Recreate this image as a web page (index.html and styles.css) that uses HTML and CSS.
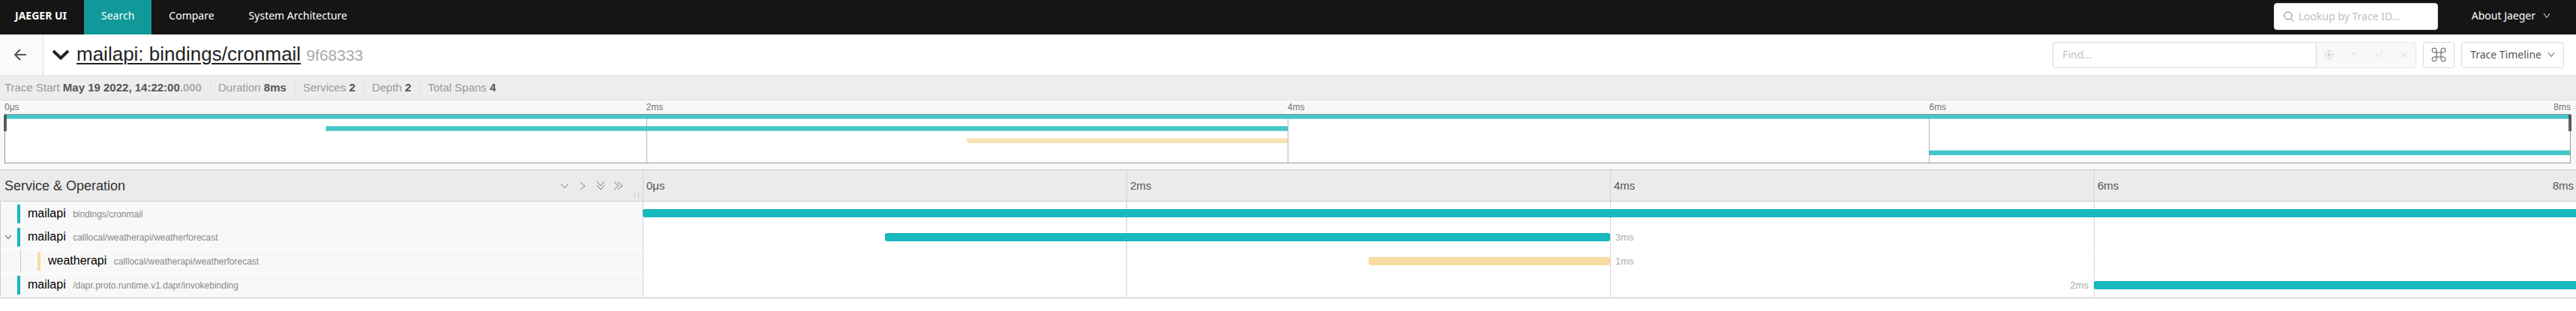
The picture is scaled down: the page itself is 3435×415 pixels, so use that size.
FILE: index.html
```html
<!DOCTYPE html>
<html lang="en">
<head>
<meta charset="utf-8">
<title>Jaeger UI</title>
<link rel="stylesheet" href="styles.css">
</head>
<body>
<nav class="topnav">
  <a class="nav-item brand" href="#">JAEGER UI</a>
  <a class="nav-item active" href="#">Search</a>
  <a class="nav-item" href="#">Compare</a>
  <a class="nav-item" href="#">System Architecture</a>
  <label class="lookup">
    <svg class="icon" width="14" height="14" viewBox="0 0 14 14"><circle cx="6" cy="6" r="5"/><path d="M9.600 9.600L13.500 13.500"/></svg>
    <input type="text" aria-label="Lookup by Trace ID" placeholder="Lookup by Trace ID...">
  </label>
  <button class="about" type="button">About Jaeger
    <svg class="icon" width="10" height="8" viewBox="0 0 10 8"><path d="M1 1L5 6.500L9 1"/></svg>
  </button>
</nav>

<header class="trace-header">
  <a class="back" href="#" aria-label="Back">
    <svg class="icon" width="16" height="16" viewBox="0 0 16 16"><path d="M16 8H1M8 1L1 8L8 15"/></svg>
  </a>
  <button class="title-toggle" type="button" aria-label="Toggle details">
    <svg class="icon" width="22" height="14" viewBox="0 0 22 14"><path d="M1 2L11 11.500L21 2"/></svg>
  </button>
  <h1 class="title"><a href="#">mailapi: bindings/cronmail</a> <small>9f68333</small></h1>
  <div class="find">
    <input type="text" aria-label="Find" placeholder="Find...">
    <div class="find-actions">
      <button type="button" disabled aria-label="Locate"><svg class="icon" width="14" height="14" viewBox="0 0 14 14"><circle cx="7" cy="7" r="5"/><circle class="dot" cx="7" cy="7" r="2"/><path d="M7 0V2M7 12V14M0 7H2M12 7H14"/></svg></button>
      <button type="button" disabled aria-label="Previous"><svg class="icon" width="12" height="8" viewBox="0 0 12 8"><path d="M1 7L6 1L11 7"/></svg></button>
      <button type="button" disabled aria-label="Next"><svg class="icon" width="12" height="8" viewBox="0 0 12 8"><path d="M1 1L6 7L11 1"/></svg></button>
      <button type="button" disabled aria-label="Clear"><svg class="icon" width="10" height="10" viewBox="0 0 10 10"><path d="M1 1L9 9M9 1L1 9"/></svg></button>
    </div>
  </div>
  <button class="tool" type="button" aria-label="Keyboard shortcuts">
    <svg class="icon" width="20" height="20" viewBox="0 0 20 20"><path d="M7 7V4A3 3 0 1 0 4 7H16A3 3 0 1 0 13 4V16A3 3 0 1 0 16 13H4A3 3 0 1 0 7 16Z"/></svg>
  </button>
  <button class="tool view" type="button">Trace Timeline
    <svg class="icon" width="10" height="8" viewBox="0 0 10 8"><path d="M1 1L5 6.500L9 1"/></svg>
  </button>
</header>

<ul class="overview">
  <li>Trace Start <b>May 19 2022, 14:22:00<span>.000</span></b></li>
  <li>Duration <b>8ms</b></li>
  <li>Services <b>2</b></li>
  <li>Depth <b>2</b></li>
  <li>Total Spans <b>4</b></li>
</ul>

<section class="minimap">
  <div class="minimap-ticks"><span>0μs</span><span>2ms</span><span>4ms</span><span>6ms</span><span class="last">8ms</span></div>
  <div class="minimap-graph">
    <svg class="minimap-spans" viewBox="0 0 800 650" preserveAspectRatio="none">
      <rect class="teal" x="0" y="-8" width="800" height="65"/>
      <rect class="teal" x="100" y="156" width="300" height="65"/>
      <rect class="sand" x="300" y="320" width="100" height="65"/>
      <rect class="teal" x="600" y="484" width="200" height="65"/>
    </svg>
    <div class="minimap-grid"><i></i><i></i><i></i><i></i></div>
    <i class="handle handle-left"></i>
    <i class="handle handle-right"></i>
  </div>
</section>

<main class="timeline">
  <div class="row head">
    <div class="names">
      <h2>Service &amp; Operation</h2>
      <div class="collapsers">
        <button type="button" aria-label="Expand one level"><svg class="icon" width="14" height="14" viewBox="0 0 14 14"><path d="M2 4L7 10L12 4"/></svg></button>
        <button type="button" aria-label="Collapse one level"><svg class="icon" width="14" height="14" viewBox="0 0 14 14"><path d="M4 2L10 7L4 12"/></svg></button>
        <button type="button" aria-label="Expand all"><svg class="icon" width="14" height="14" viewBox="0 0 14 14"><path d="M2 1L7 7L12 1M2 6L7 12L12 6"/></svg></button>
        <button type="button" aria-label="Collapse all"><svg class="icon" width="14" height="14" viewBox="0 0 14 14"><path d="M1 2L7 7L1 12M6 2L12 7L6 12"/></svg></button>
      </div>
      <span class="grip"></span>
    </div>
    <div class="track"><span>0μs</span><span>2ms</span><span>4ms</span><span class="split">6ms<span>8ms</span></span></div>
  </div>

  <div class="row">
    <div class="names"><span class="twist"></span><a class="span-name teal" href="#">mailapi <small>bindings/cronmail</small></a></div>
    <div class="track"><i></i><i></i><i></i><i></i><div class="bar teal" style="left:0%;width:100%"></div></div>
  </div>
  <div class="row lined">
    <div class="names"><button class="twist" type="button" aria-label="Collapse children"><svg class="icon" width="10" height="7" viewBox="0 0 10 7"><path d="M1 1L5 5.500L9 1"/></svg></button><a class="span-name teal" href="#">mailapi <small>calllocal/weatherapi/weatherforecast</small></a></div>
    <div class="track"><i></i><i></i><i></i><i></i><div class="bar teal" style="left:12.5%;width:37.5%"><span class="after">3ms</span></div></div>
  </div>
  <div class="row lined">
    <div class="names"><span class="twist"></span><span class="guide"></span><a class="span-name sand" href="#">weatherapi <small>calllocal/weatherapi/weatherforecast</small></a></div>
    <div class="track"><i></i><i></i><i></i><i></i><div class="bar sand" style="left:37.5%;width:12.5%"><span class="after">1ms</span></div></div>
  </div>
  <div class="row lined">
    <div class="names"><span class="twist"></span><a class="span-name teal" href="#">mailapi <small>/dapr.proto.runtime.v1.dapr/invokebinding</small></a></div>
    <div class="track"><i></i><i></i><i></i><i></i><div class="bar teal" style="left:75%;width:25%"><span class="before">2ms</span></div></div>
  </div>
</main>
</body>
</html>
```
FILE: styles.css
```css
* { box-sizing: border-box; }
body { margin: 0; background: #fff; color: #555; font: 14px/20px "Liberation Sans", Arial, sans-serif; overflow-x: hidden; }
a { color: inherit; text-decoration: none; }
button { margin: 0; padding: 0; border: 0; background: none; color: inherit; font: inherit; }
input { margin: 0; border: 0; outline: 0; background: none; color: #555; font: 14px/20px "Noto Sans", sans-serif; }
input::placeholder { color: #bfbfbf; opacity: 1; }
.icon { display: block; flex: none; fill: none; stroke: currentColor; stroke-width: 1; }

.topnav { display: flex; align-items: center; height: 46px; background: #151515; color: #fff; font: 14px/46px "Noto Sans", sans-serif; }
.nav-item { padding: 0 23px 4px; line-height: 42px; }
.brand { padding-left: 20px; font-weight: 700; }
.active { background: #119999; }
.lookup { display: flex; align-items: center; gap: 6px; width: 219px; height: 36px; margin: 0 45px 2px auto; padding: 0 12px; border: 1px solid #d9d9d9; border-radius: 4px; background: #fff; color: #777; }
.lookup input { flex: 1; min-width: 0; padding: 0; }
.about { display: flex; align-items: center; gap: 10px; margin-right: 34px; line-height: 42px; padding-bottom: 4px; }

.trace-header { display: flex; align-items: center; height: 55px; padding-right: 16px; border-bottom: 1px solid #e4e4e4; }
.back { display: flex; align-items: center; align-self: stretch; width: 58px; padding-left: 19px; border-right: 1px solid #ddd; background: #fafafa; }
.back .icon { stroke-width: 2; }
.title-toggle { margin-left: 12px; color: #222; }
.title-toggle .icon { stroke-width: 4; }
.title { flex: 1; margin: 0 0 0 10px; color: #222; font-size: 26px; line-height: 32px; font-weight: 400; }
.title a { text-decoration: underline; text-underline-offset: 3px; text-decoration-thickness: 2px; }
.title small { color: #aaa; font-size: 21px; }
.find { display: flex; height: 35px; margin-right: 9px; }
.find input { width: 352px; padding: 0 12px; border: 1px solid #d9d9d9; border-radius: 4px 0 0 4px; }
.find-actions { display: grid; grid-template-columns: repeat(4, 33px); border: 1px solid #e6e6e6; border-left: 0; border-radius: 0 4px 4px 0; background: #f9f9f9; color: #ddd; }
.find-actions button { display: grid; place-items: center; color: #d5d5d5; }
.dot { fill: currentColor; }
.tool { display: flex; align-items: center; gap: 8px; height: 35px; margin-left: 9px; padding: 0 10px; border: 1px solid #d9d9d9; border-radius: 4px; color: #555; font: 14px/20px "Noto Sans", sans-serif; }
.view { padding: 0 11px; }
.find + .tool { margin-left: 0; }

.overview { display: flex; margin: 0; padding: 0 6px; height: 33px; list-style: none; line-height: 32px; font-size: 15px; color: #999; background: #ededed; border-bottom: 1px solid #e0e0e0; }
.overview li + li { margin-left: 11px; padding-left: 11px; background: linear-gradient(#ddd, #ddd) 0 9px / 1px 14px no-repeat; }
.overview b { color: #555; }
.overview b span { color: #aaa; }

.minimap { padding: 0 7px 8px 6px; background: #f8f8f8; border-bottom: 1px solid #ccc; }
.minimap-ticks { display: grid; grid-template-columns: repeat(3, 1fr) 1fr auto; height: 18px; font-size: 12px; line-height: 18px; color: #717171; }
.minimap-ticks span { width: 0; }
.minimap-ticks .last { display: flex; justify-content: flex-end; }
.minimap-graph { position: relative; height: 66px; border: 1px solid #999; background: #fff; }
.minimap-spans { display: block; width: 100%; height: 100%; }
.teal { --tone: #17b8be; }
.sand { --tone: #f8dca1; }
.minimap-spans rect { fill: var(--tone); opacity: .8; }
.minimap-grid { position: absolute; inset: 0; display: grid; grid-template-columns: repeat(4, 1fr); }
.minimap-grid i + i { border-left: 1px solid rgba(153, 153, 153, .7); }
.handle { position: absolute; top: 0; width: 4px; height: 22px; background: rgba(70, 70, 70, .85); }
.handle-left { left: -2px; }
.handle-right { right: -2px; }

.row { display: flex; height: 32px; margin-right: -2px; }
.names { position: relative; display: flex; align-items: center; flex: 0 0 857px; border-left: 1px solid #ccc; background: #f8f8f8; }
.track { position: relative; display: grid; grid-template-columns: repeat(4, 1fr); flex: 1; }
.track > i, .track > span { border-left: 1px solid #d4d4d4; }
.lined { border-bottom: 1px solid #fff; }
.timeline { border-bottom: 1px solid #bbb; overflow: hidden; }
.head { height: 42px; background: #ebebeb; border-bottom: 1px solid #ccc; }
.head .names { padding-left: 6px; border: 0; background: none; }
.head h2 { flex: 1; margin: 0; color: #333; font-size: 18px; font-weight: 400; }
.head .track { font-size: 15px; line-height: 41px; }
.head .track > span { padding-left: 4px; }
.split { display: flex; justify-content: space-between; padding-right: 5px; }
.collapsers { display: flex; gap: 10px; margin-right: 25px; color: #777; }
.grip { position: absolute; right: 5px; bottom: 4px; width: 6px; height: 9px; border: 1px solid #ccc; border-width: 0 1px; }
.twist { width: 22px; flex: none; padding-left: 5px; color: #222; }
.guide { align-self: stretch; width: 27px; margin-left: 4px; border-left: 1px solid #ccc; margin-right: -4px; }
.span-name { padding-left: 10px; border-left: 4px solid var(--tone); color: #000; font-size: 16px; line-height: 23px; }
.span-name small { margin-left: 5px; color: #888; font-size: 12px; }
.bar { position: absolute; top: 10px; height: 11px; border-radius: 3px; background: var(--tone); }
.after, .before { position: absolute; top: 0; font-size: 13px; line-height: 12px; color: #aaa; }
.after { left: 100%; margin-left: 7px; }
.before { right: 100%; margin-right: 7px; }
```
